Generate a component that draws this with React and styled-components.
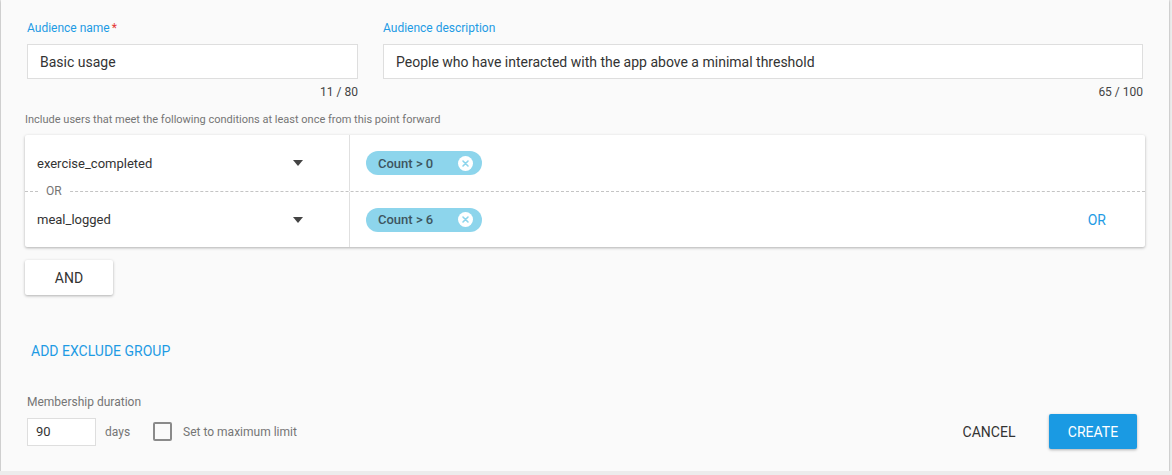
import React from 'react';
import styled, { createGlobalStyle } from 'styled-components';

const GlobalStyle = createGlobalStyle`
  html, body {
    margin: 0;
    padding: 0;
    background: #ececec;
  }
  body {
    font-family: Roboto, "Noto Sans", Arial, sans-serif;
    color: #333;
  }
`;

const BLUE = '#1e9be4';

const Panel = styled.div`
  box-sizing: border-box;
  margin-left: 1px;
  width: 1168px;
  height: 471px;
  padding: 20px 24px 0 24px;
  background: #fafafa;
  box-shadow: 0 1px 2px rgba(0, 0, 0, 0.28), 0 0 1px rgba(0, 0, 0, 0.2);
`;

const FieldRow = styled.div`
  display: flex;
  gap: 25px;
  padding: 0 2px;
`;

const Field = styled.div`
  display: flex;
  flex-direction: column;
  width: ${(p) => p.width}px;
`;

const Label = styled.label`
  font-size: 12px;
  line-height: 16px;
  color: ${BLUE};
`;

const Required = styled.span`
  color: #e53935;
  margin-left: 2px;
`;

const TextBox = styled.div`
  box-sizing: border-box;
  margin-top: 8px;
  height: 35px;
  padding: 0 12px;
  display: flex;
  align-items: center;
  background: #fff;
  border: 1px solid #dedede;
  font-size: 14px;
  color: #333;
`;

const Counter = styled.div`
  margin-top: 6px;
  text-align: right;
  font-size: 12px;
  line-height: 14px;
  color: #444;
`;

const Hint = styled.div`
  margin-top: 14px;
  font-size: 11px;
  line-height: 14px;
  color: #757575;
`;

const Card = styled.div`
  margin-top: 8px;
  background: #fff;
  border-radius: 2px;
  box-shadow: 0 1px 3px rgba(0, 0, 0, 0.3);
`;

const ConditionRow = styled.div`
  display: flex;
  height: 56px;
  position: relative;
  border-top: ${(p) => (p.divided ? '1px dashed #c4c4c4' : 'none')};
  box-sizing: border-box;
`;

const OrDivider = styled.span`
  position: absolute;
  left: 13px;
  top: -8px;
  padding: 0 8px;
  background: #fff;
  font-size: 12px;
  line-height: 14px;
  color: #757575;
`;

const EventCell = styled.div`
  box-sizing: border-box;
  width: 325px;
  flex-shrink: 0;
  display: flex;
  align-items: center;
  justify-content: space-between;
  padding: 0 46px 0 12px;
  border-right: 1px solid #e0e0e0;
  font-size: 13px;
  color: #333;
`;

const Caret = styled.span`
  width: 0;
  height: 0;
  border-left: 5px solid transparent;
  border-right: 5px solid transparent;
  border-top: 6px solid #444;
`;

const FilterCell = styled.div`
  flex: 1;
  display: flex;
  align-items: center;
  justify-content: space-between;
  padding: 0 39px 0 16px;
`;

const Chip = styled.div`
  display: flex;
  align-items: center;
  justify-content: space-between;
  box-sizing: border-box;
  width: 116px;
  height: 24px;
  padding: 0 9px 0 12px;
  border-radius: 12px;
  background: #8dd5ec;
  font-size: 13px;
  font-weight: 500;
  color: #3d5560;
`;

const TextButton = styled.button`
  border: none;
  background: none;
  padding: 0;
  font-family: inherit;
  font-size: 14px;
  color: ${BLUE};
  cursor: pointer;
`;

const AndButton = styled.button`
  margin-top: 13px;
  width: 88px;
  height: 35px;
  border: none;
  border-radius: 2px;
  background: #fff;
  box-shadow: 0 1px 3px rgba(0, 0, 0, 0.3);
  font-family: inherit;
  font-size: 14px;
  color: #333;
  display: block;
`;

const ExcludeLink = styled(TextButton)`
  display: block;
  margin: 48px 0 0 6px;
  line-height: 16px;
`;

const DurationLabel = styled.div`
  margin: 35px 0 0 2px;
  font-size: 12px;
  line-height: 16px;
  color: #757575;
`;

const BottomRow = styled.div`
  margin-top: 4px;
  display: flex;
  align-items: center;
  justify-content: space-between;
  padding: 0 8px 0 2px;
`;

const DurationGroup = styled.div`
  display: flex;
  align-items: center;
`;

const DaysBox = styled.div`
  box-sizing: border-box;
  width: 69px;
  height: 28px;
  padding: 0 8px;
  display: flex;
  align-items: center;
  background: #fff;
  border: 1px solid #dedede;
  font-size: 13px;
  color: #333;
`;

const Muted = styled.span`
  font-size: 12px;
  color: #757575;
  margin-left: ${(p) => p.gap || 0}px;
`;

const CheckBox = styled.span`
  box-sizing: border-box;
  width: 19px;
  height: 19px;
  margin-left: 23px;
  border: 2px solid #8a8a8a;
  border-radius: 2px;
`;

const Actions = styled.div`
  display: flex;
  align-items: center;
  gap: 16px;
`;

const ActionButton = styled.button`
  width: 88px;
  height: 35px;
  border: none;
  border-radius: 2px;
  font-family: inherit;
  font-size: 14px;
  background: ${(p) => (p.primary ? '#1a9ae3' : 'transparent')};
  color: ${(p) => (p.primary ? '#fff' : '#333')};
  box-shadow: ${(p) => (p.primary ? '0 1px 3px rgba(0, 0, 0, 0.3)' : 'none')};
`;

function ClearIcon() {
  return (
    <svg width="15" height="15" viewBox="0 0 15 15">
      <circle cx="7.5" cy="7.5" r="7.5" fill="#fff" />
      <path d="M5 5 L10 10 M10 5 L5 10" stroke="#8dd5ec" strokeWidth="1.6" strokeLinecap="round" />
    </svg>
  );
}

const conditions = [
  { event: 'exercise_completed', filter: 'Count > 0' },
  { event: 'meal_logged', filter: 'Count > 6' },
];

export default function App() {
  return (
    <>
      <GlobalStyle />
      <Panel>
        <FieldRow>
          <Field width={331}>
            <Label>
              Audience name<Required>*</Required>
            </Label>
            <TextBox>Basic usage</TextBox>
            <Counter>11 / 80</Counter>
          </Field>
          <Field width={760}>
            <Label>Audience description</Label>
            <TextBox>People who have interacted with the app above a minimal threshold</TextBox>
            <Counter>65 / 100</Counter>
          </Field>
        </FieldRow>

        <Hint>Include users that meet the following conditions at least once from this point forward</Hint>

        <Card>
          {conditions.map((c, i) => (
            <ConditionRow key={c.event} divided={i > 0}>
              {i > 0 && <OrDivider>OR</OrDivider>}
              <EventCell>
                {c.event}
                <Caret />
              </EventCell>
              <FilterCell>
                <Chip>
                  {c.filter}
                  <ClearIcon />
                </Chip>
                {i === conditions.length - 1 && <TextButton>OR</TextButton>}
              </FilterCell>
            </ConditionRow>
          ))}
        </Card>

        <AndButton>AND</AndButton>

        <ExcludeLink>ADD EXCLUDE GROUP</ExcludeLink>

        <DurationLabel>Membership duration</DurationLabel>
        <BottomRow>
          <DurationGroup>
            <DaysBox>90</DaysBox>
            <Muted gap={9}>days</Muted>
            <CheckBox />
            <Muted gap={11}>Set to maximum limit</Muted>
          </DurationGroup>
          <Actions>
            <ActionButton>CANCEL</ActionButton>
            <ActionButton primary>CREATE</ActionButton>
          </Actions>
        </BottomRow>
      </Panel>
    </>
  );
}
